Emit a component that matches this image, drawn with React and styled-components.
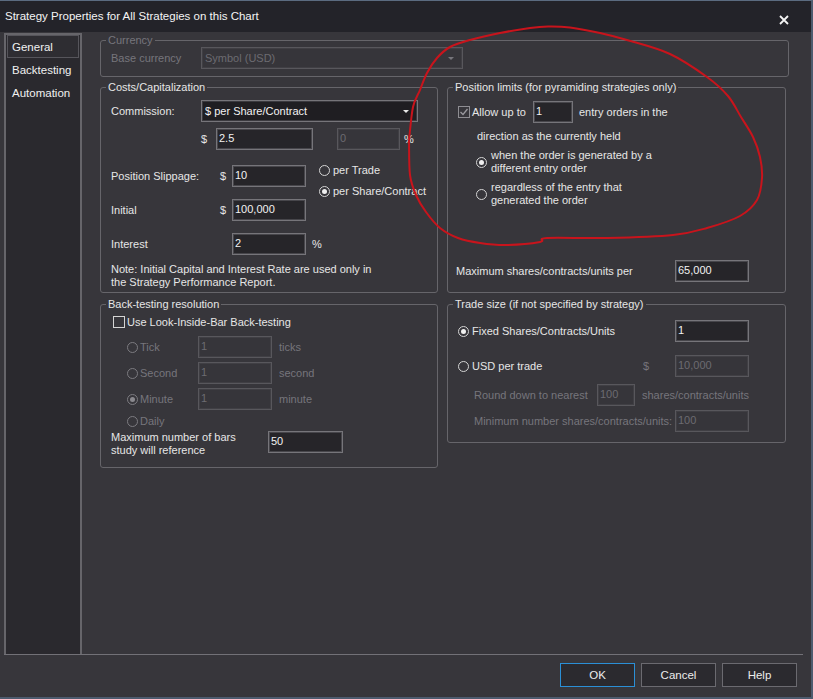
import React from "react";
import styled, { createGlobalStyle } from "styled-components";

const GlobalStyle = createGlobalStyle`
  html, body {
    margin: 0;
    padding: 0;
    background: #37363b;
  }
  body {
    font-family: "Liberation Sans", Arial, sans-serif;
    font-size: 11px;
    color: #e6e6e6;
  }
  * {
    box-sizing: border-box;
  }
`;

const Window = styled.div`
  position: relative;
  width: 813px;
  height: 699px;
  background: #37363b;
  border-top: 1px solid #5b6b80;
  border-right: 2px solid #4d5b6e;
  border-bottom: 2px solid #4d5b6e;
  display: flex;
  flex-direction: column;
  overflow: hidden;
`;

const TitleBar = styled.div`
  height: 31px;
  flex: none;
  background: #232329;
  display: flex;
  align-items: center;
  justify-content: space-between;
  padding: 0 22px 1px 5px;
  color: #f4f4f4;
  font-size: 11.5px;
`;

const Close = styled.svg`
  margin-top: 7px;
`;

const Main = styled.div`
  display: flex;
  height: 623px;
  margin: 0 8px 0 4px;
  border-bottom: 1px solid #727177;
`;

const Nav = styled.div`
  width: 78px;
  flex: none;
  margin-top: 1px;
  padding: 0 1px;
  background: #2a292e;
  border: 2px solid #66656a;
  border-bottom: none;
  font-size: 11.5px;
`;

const NavItem = styled.div`
  height: 23px;
  display: flex;
  align-items: center;
  padding-left: 4px;
  color: #f0f0f0;
  border: 1px solid ${(p) => (p.$active ? "#56555b" : "transparent")};
  background: ${(p) => (p.$active ? "#2e2d32" : "transparent")};
`;

const Content = styled.div`
  width: 689px;
  margin-left: 18px;
  padding-top: 1px;
  display: flex;
  flex-direction: column;
`;

const Columns = styled.div`
  margin-top: 3px;
  display: grid;
  grid-template-columns: 338px 339px;
  column-gap: 9px;
  row-gap: 4px;
  align-items: start;
`;

const Group = styled.fieldset`
  margin: 0;
  padding: 0;
  min-width: 0;
  height: ${(p) => p.$h}px;
  border: 1px solid #66656a;
  border-radius: 3px;
`;

const Legend = styled.legend`
  margin-left: 5px;
  padding: 0 2px;
  line-height: 14px;
  color: ${(p) => (p.$disabled ? "#76757b" : "#e6e6e6")};
`;

const Body = styled.div`
  display: flex;
  flex-direction: column;
  padding: ${(p) => p.$pad};
`;

const Row = styled.div`
  display: flex;
  align-items: center;
  height: ${(p) => p.$h || 22}px;
  margin-top: ${(p) => p.$mt || 0}px;
  margin-left: ${(p) => p.$ml || 0}px;
`;

const Text = styled.span`
  flex: none;
  white-space: nowrap;
  width: ${(p) => (p.$w ? `${p.$w}px` : "auto")};
  margin-left: ${(p) => p.$ml || 0}px;
  color: ${(p) => (p.$disabled ? "#76757b" : "#e6e6e6")};
`;

const Input = styled.input`
  flex: none;
  width: ${(p) => p.$w}px;
  height: 22px;
  margin: 0;
  margin-left: ${(p) => p.$ml || 0}px;
  padding: 0 0 2px 2px;
  font: inherit;
  color: ${(p) => (p.disabled ? "#6c6b71" : "#f2f2f2")};
  background: ${(p) => (p.disabled ? "#36353a" : "#262529")};
  border: 1px solid ${(p) => (p.disabled ? "#58575c" : "#76757a")};
  box-shadow: inset 0 0 0 1px ${(p) => (p.disabled ? "#403f44" : "#47464b")};
  outline: none;
`;

const Select = styled.div`
  flex: none;
  position: relative;
  width: ${(p) => p.$w}px;
  height: 22px;
  display: flex;
  align-items: center;
  padding: 0 3px 1px;
  color: ${(p) => (p.$disabled ? "#6c6b71" : "#f2f2f2")};
  background: ${(p) => (p.$disabled ? "#36353a" : "#1f1e22")};
  border: 1px solid ${(p) => (p.$disabled ? "#58575c" : "#76757a")};
  box-shadow: inset 0 0 0 1px ${(p) => (p.$disabled ? "#403f44" : "#3b3a3f")};

  &::after {
    content: "";
    position: absolute;
    right: 8px;
    top: 9px;
    border-left: 3px solid transparent;
    border-right: 3px solid transparent;
    border-top: 3px solid ${(p) => (p.$disabled ? "#77767c" : "#e8e8e8")};
  }
`;

const Option = styled.div`
  display: flex;
  align-items: center;
  gap: ${(p) => (p.$gap === undefined ? 3 : p.$gap)}px;
  flex: none;
  width: ${(p) => (p.$w ? `${p.$w}px` : "auto")};
  line-height: 13px;
  color: ${(p) => (p.$disabled ? "#76757b" : "#e6e6e6")};
`;

const RadioDot = styled.span`
  flex: none;
  width: 11px;
  height: 11px;
  border-radius: 50%;
  border: 1px solid ${(p) => (p.$disabled ? "#7c7b80" : "#d4d4d4")};
  display: inline-flex;
  align-items: center;
  justify-content: center;

  &::after {
    content: "";
    display: ${(p) => (p.$checked ? "block" : "none")};
    width: 5px;
    height: 5px;
    border-radius: 50%;
    background: ${(p) => (p.$disabled ? "#8a898e" : "#f0f0f0")};
  }
`;

const CheckBox = styled.span`
  flex: none;
  width: 12px;
  height: 12px;
  border: 1px solid ${(p) => (p.$dim ? "#8e8d92" : "#d4d4d4")};
  display: inline-flex;
  align-items: center;
  justify-content: center;
`;

const SlipGrid = styled.div`
  margin-top: 15px;
  display: grid;
  grid-template-columns: 109px 12px 74px 13px auto;
  grid-template-rows: 22px 22px 22px;
  row-gap: 12px;
  align-items: center;
`;

const RadioStack = styled.div`
  grid-column: 5;
  grid-row: 1 / span 2;
  align-self: start;
  margin-top: -1px;
  display: flex;
  flex-direction: column;
  gap: 8px;
`;

const Note = styled.div`
  margin-top: 8px;
  line-height: 13px;
`;

const ResGrid = styled.div`
  margin: 7px 0 0 16px;
  display: grid;
  grid-template-columns: 71px 74px auto;
  grid-template-rows: 22px 22px 22px 14px;
  row-gap: 4px;
  align-items: center;
`;

const Wrapped = styled.div`
  line-height: 13px;
  padding-top: ${(p) => p.$pt || 0}px;
`;

const Footer = styled.div`
  display: flex;
  justify-content: flex-end;
  gap: 6px;
  padding: 8px 14px 0 0;
`;

const Button = styled.div`
  width: 75px;
  height: 24px;
  display: flex;
  align-items: center;
  justify-content: center;
  background: #2b2a2f;
  color: #ececec;
  font-size: 11.5px;
  border: 1px solid ${(p) => (p.$primary ? "#2b8fd6" : "#6b6a70")};
`;

const Annotation = styled.svg`
  position: absolute;
  top: -1px;
  left: 0;
  pointer-events: none;
`;

// freehand loop drawn over the "Position limits" box
const loop = [
  [409, 140], [413, 107], [420, 90], [427, 73], [437, 58], [450, 47], [470, 40],
  [500, 33], [530, 28], [548, 26.5], [570, 27.5], [600, 33], [627, 40], [670, 54],
  [707, 77], [728, 96], [741, 117], [753, 137], [760, 157], [762, 178], [757, 200],
  [740, 216], [707, 228], [673, 235], [607, 238], [547, 238], [540, 242], [507, 245],
  [480, 243], [458, 238], [440, 228], [426, 212], [416, 195], [410, 175], [409, 140],
];

const smooth = (pts) => {
  let d = `M${pts[0][0]},${pts[0][1]}`;
  for (let i = 0; i < pts.length - 1; i++) {
    const p0 = pts[i - 1] || pts[i];
    const p1 = pts[i];
    const p2 = pts[i + 1];
    const p3 = pts[i + 2] || p2;
    const c1 = [p1[0] + (p2[0] - p0[0]) / 6, p1[1] + (p2[1] - p0[1]) / 6];
    const c2 = [p2[0] - (p3[0] - p1[0]) / 6, p2[1] - (p3[1] - p1[1]) / 6];
    d += ` C${c1[0].toFixed(1)},${c1[1].toFixed(1)} ${c2[0].toFixed(1)},${c2[1].toFixed(1)} ${p2[0]},${p2[1]}`;
  }
  return d;
};

const Radio = ({ checked, disabled }) => <RadioDot $checked={checked} $disabled={disabled} />;

const Check = ({ checked, dim }) => (
  <CheckBox $dim={dim}>
    {checked && (
      <svg width="10" height="10" viewBox="0 0 10 10">
        <polyline points="1.5,5 4,7.5 8.5,2" fill="none" stroke="#9a999e" strokeWidth="1.3" />
      </svg>
    )}
  </CheckBox>
);

export default function App() {
  return (
    <Window>
      <GlobalStyle />
      <TitleBar>
        <span>Strategy Properties for All Strategies on this Chart</span>
        <Close width="10" height="10" viewBox="0 0 10 10">
          <path d="M1 1 L9 9 M9 1 L1 9" stroke="#f4f4f4" strokeWidth="1.8" />
        </Close>
      </TitleBar>

      <Main>
        <Nav>
          <NavItem $active>General</NavItem>
          <NavItem>Backtesting</NavItem>
          <NavItem>Automation</NavItem>
        </Nav>

        <Content>
          <Group $h={44}>
            <Legend $disabled>Currency</Legend>
            <Body $pad="0 0 0 10px">
              <Row>
                <Text $w={90} $disabled>Base currency</Text>
                <Select $w={262} $disabled>Symbol (USD)</Select>
              </Row>
            </Body>
          </Group>

          <Columns>
            <Group $h={213}>
              <Legend>Costs/Capitalization</Legend>
              <Body $pad="6px 0 0 10px">
                <Row>
                  <Text $w={90}>Commission:</Text>
                  <Select $w={217}>$ per Share/Contract</Select>
                </Row>
                <Row $mt={6}>
                  <Text $w={105} style={{ paddingLeft: 90 }}>$</Text>
                  <Input $w={97} readOnly value="2.5" />
                  <Input $w={63} $ml={24} disabled value="0" />
                  <Text $ml={4}>%</Text>
                </Row>
                <SlipGrid>
                  <Text>Position Slippage:</Text>
                  <Text>$</Text>
                  <Input $w={74} readOnly value="10" />
                  <RadioStack>
                    <Option>
                      <Radio />
                      per Trade
                    </Option>
                    <Option>
                      <Radio checked />
                      per Share/Contract
                    </Option>
                  </RadioStack>
                  <Text style={{ gridColumn: 1, gridRow: 2 }}>Initial</Text>
                  <Text style={{ gridColumn: 2, gridRow: 2 }}>$</Text>
                  <Input $w={74} style={{ gridColumn: 3, gridRow: 2 }} readOnly value="100,000" />
                  <Text style={{ gridColumn: 1, gridRow: 3 }}>Interest</Text>
                  <Input $w={74} style={{ gridColumn: 3, gridRow: 3 }} readOnly value="2" />
                  <Text $ml={6} style={{ gridColumn: "4 / span 2", gridRow: 3 }}>%</Text>
                </SlipGrid>
                <Note>
                  Note: Initial Capital and Interest Rate are used only in
                  <br />
                  the Strategy Performance Report.
                </Note>
              </Body>
            </Group>

            <Group $h={213}>
              <Legend>Position limits (for pyramiding strategies only)</Legend>
              <Body $pad="7px 0 0 10px">
                <Row>
                  <Check checked dim />
                  <Text $w={61} $ml={2}>Allow up to</Text>
                  <Input $w={40} readOnly value="1" />
                  <Text $ml={6}>entry orders in the</Text>
                </Row>
                <Row $h={14} $mt={6} $ml={19}>
                  <Text>direction as the currently held</Text>
                </Row>
                <Row $h={26} $mt={6} $ml={18}>
                  <Option $gap={4}>
                    <Radio checked />
                    <Wrapped>
                      when the order is generated by a
                      <br />
                      different entry order
                    </Wrapped>
                  </Option>
                </Row>
                <Row $h={26} $mt={6} $ml={18}>
                  <Option $gap={4}>
                    <Radio />
                    <Wrapped>
                      regardless of the entry that
                      <br />
                      generated the order
                    </Wrapped>
                  </Option>
                </Row>
                <Row $mt={53} $ml={-2}>
                  <Text $w={219}>Maximum shares/contracts/units per</Text>
                  <Input $w={74} readOnly value="65,000" />
                </Row>
              </Body>
            </Group>

            <Group $h={171}>
              <Legend>Back-testing resolution</Legend>
              <Body $pad="4px 0 0 10px">
                <Row $h={14} $ml={2}>
                  <Check />
                  <Text $ml={2}>Use Look-Inside-Bar Back-testing</Text>
                </Row>
                <ResGrid>
                  <Option $disabled $gap={2}>
                    <Radio disabled />
                    Tick
                  </Option>
                  <Input $w={74} disabled value="1" />
                  <Text $ml={7} $disabled>ticks</Text>
                  <Option $disabled $gap={2}>
                    <Radio disabled />
                    Second
                  </Option>
                  <Input $w={74} disabled value="1" />
                  <Text $ml={7} $disabled>second</Text>
                  <Option $disabled $gap={2}>
                    <Radio disabled checked />
                    Minute
                  </Option>
                  <Input $w={74} disabled value="1" />
                  <Text $ml={7} $disabled>minute</Text>
                  <Option $disabled $gap={2}>
                    <Radio disabled />
                    Daily
                  </Option>
                </ResGrid>
                <Row $mt={3}>
                  <Wrapped $pt={4} style={{ width: 157 }}>
                    Maximum number of bars
                    <br />
                    study will reference
                  </Wrapped>
                  <Input $w={75} readOnly value="50" />
                </Row>
              </Body>
            </Group>

            <Group $h={146}>
              <Legend>Trade size (if not specified by strategy)</Legend>
              <Body $pad="9px 0 0 10px">
                <Row>
                  <Option $w={217}>
                    <Radio checked />
                    Fixed Shares/Contracts/Units
                  </Option>
                  <Input $w={74} readOnly value="1" />
                </Row>
                <Row $mt={13}>
                  <Option $w={185}>
                    <Radio />
                    USD per trade
                  </Option>
                  <Text $w={32} $disabled>$</Text>
                  <Input $w={74} disabled value="10,000" />
                </Row>
                <Row $mt={7} $ml={16}>
                  <Text $w={123} $disabled>Round down to nearest</Text>
                  <Input $w={38} disabled value="100" />
                  <Text $ml={7} $disabled>shares/contracts/units</Text>
                </Row>
                <Row $mt={4} $ml={16}>
                  <Text $w={201} $disabled>Minimum number shares/contracts/units:</Text>
                  <Input $w={74} disabled value="100" />
                </Row>
              </Body>
            </Group>
          </Columns>
        </Content>
      </Main>

      <Footer>
        <Button $primary>OK</Button>
        <Button>Cancel</Button>
        <Button>Help</Button>
      </Footer>

      <Annotation width="813" height="699" viewBox="0 0 813 699">
        <path d={smooth(loop)} fill="none" stroke="#c8141c" strokeWidth="2" strokeLinejoin="round" />
      </Annotation>
    </Window>
  );
}
